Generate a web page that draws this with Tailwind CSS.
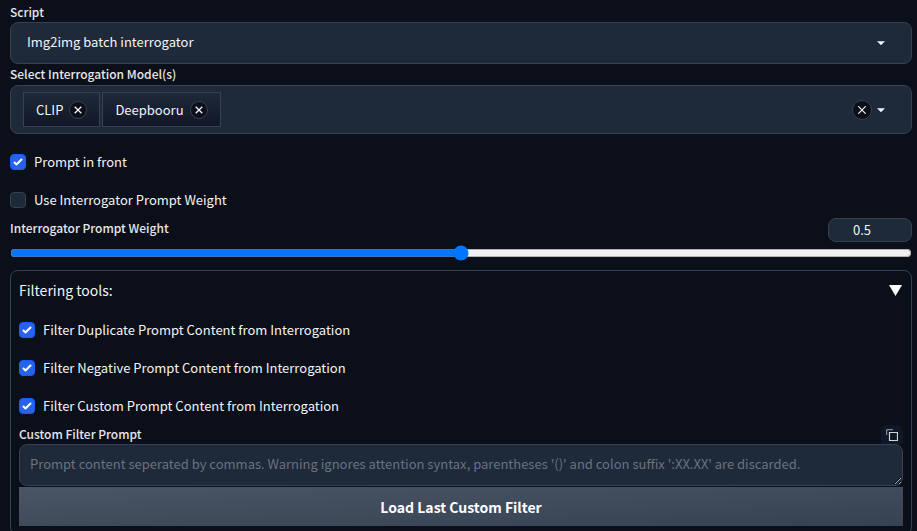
<!DOCTYPE html>
<html lang="en">
<head>
<meta charset="utf-8">
<meta name="viewport" content="width=device-width, initial-scale=1">
<title>Img2img batch interrogator</title>
<script src="https://cdn.jsdelivr.net/npm/@tailwindcss/browser@4"></script>
</head>
<body class="overflow-hidden bg-[#0b0f19] font-['Source_Sans_Pro','Noto_Sans_CJK_SC',sans-serif] text-[13px] leading-5 text-gray-100">
<main class="flex flex-col pl-2.5 pr-[5px] pt-0.5">

  <label for="script" class="h-5 text-xs leading-5 font-medium text-gray-200">Script</label>
  <div class="grid items-center">
    <select id="script" class="col-start-1 row-start-1 h-[42px] w-full appearance-none rounded-lg border border-gray-700 bg-gray-800 px-4 pb-0.5 text-gray-100">
      <option>Img2img batch interrogator</option>
    </select>
    <svg class="pointer-events-none col-start-1 row-start-1 mr-[22px] size-[18px] justify-self-end fill-gray-100" viewBox="0 0 18 18" aria-hidden="true"><path d="M5 7.3l4 4 4-4z"/></svg>
  </div>

  <span id="models-label" class="h-[21px] text-xs leading-5 font-medium text-gray-200">Select Interrogation Model(s)</span>
  <div role="group" aria-labelledby="models-label" class="flex h-[49px] items-center gap-0.5 rounded-lg border border-gray-700 bg-gray-800 pl-3 pr-[21px]">
    <span class="flex h-[35px] items-center gap-1.5 border border-gray-700 bg-linear-to-b from-gray-800 to-gray-900 px-3">CLIP
      <button type="button" aria-label="Remove CLIP" class="flex size-[18px] items-center justify-center rounded-full border border-gray-700 bg-[#0b0f19]"><svg class="size-2 stroke-gray-100" viewBox="0 0 8 8" fill="none" stroke-width="1.3" aria-hidden="true"><path d="M.7.7l6.6 6.6M7.3.7L.7 7.3"/></svg></button>
    </span>
    <span class="flex h-[35px] items-center gap-1.5 border border-gray-700 bg-linear-to-b from-gray-800 to-gray-900 px-3">Deepbooru
      <button type="button" aria-label="Remove Deepbooru" class="flex size-[18px] items-center justify-center rounded-full border border-gray-700 bg-[#0b0f19]"><svg class="size-2 stroke-gray-100" viewBox="0 0 8 8" fill="none" stroke-width="1.3" aria-hidden="true"><path d="M.7.7l6.6 6.6M7.3.7L.7 7.3"/></svg></button>
    </span>
    <button type="button" aria-label="Clear all" class="ml-auto flex size-5 items-center justify-center rounded-full border border-gray-700 bg-[#0b0f19]"><svg class="size-2 stroke-gray-100" viewBox="0 0 8 8" fill="none" stroke-width="1.2" aria-hidden="true"><path d="M.3.3l7.4 7.4M7.7.3L.3 7.7"/></svg></button>
    <button type="button" aria-label="Open model list" class="-ml-0.5"><svg class="size-[18px] fill-gray-100" viewBox="0 0 18 18" aria-hidden="true"><path d="M5 7.3l4 4 4-4z"/></svg></button>
  </div>

  <div class="mt-[18px] flex flex-col gap-[18px]">
    <label class="flex items-center gap-2">
      <span class="grid size-4 items-center justify-items-center"><input type="checkbox" checked class="peer col-start-1 row-start-1 size-4 appearance-none rounded border border-gray-700 bg-gray-800 checked:border-blue-600 checked:bg-[#2563eb]"><svg class="pointer-events-none invisible col-start-1 row-start-1 size-4 fill-white peer-checked:visible" viewBox="0 0 16 16" aria-hidden="true"><path d="M12.207 4.793a1 1 0 010 1.414l-5 5a1 1 0 01-1.414 0l-2-2a1 1 0 011.414-1.414L6.5 9.086l4.293-4.293a1 1 0 011.414 0z"/></svg></span>
      Prompt in front
    </label>
    <label class="flex items-center gap-2">
      <span class="grid size-4 items-center justify-items-center"><input type="checkbox" class="peer col-start-1 row-start-1 size-4 appearance-none rounded border border-gray-700 bg-gray-800 checked:border-blue-600 checked:bg-[#2563eb]"><svg class="pointer-events-none invisible col-start-1 row-start-1 size-4 fill-white peer-checked:visible" viewBox="0 0 16 16" aria-hidden="true"><path d="M12.207 4.793a1 1 0 010 1.414l-5 5a1 1 0 01-1.414 0l-2-2a1 1 0 011.414-1.414L6.5 9.086l4.293-4.293a1 1 0 011.414 0z"/></svg></span>
      Use Interrogator Prompt Weight
    </label>
  </div>

  <div class="mt-2 flex items-start justify-between">
    <label for="weight" class="text-xs leading-5 font-medium text-gray-200">Interrogator Prompt Weight</label>
    <input type="text" inputmode="decimal" value="0.5" aria-label="Interrogator Prompt Weight value" class="h-6 w-[84px] rounded-lg border border-gray-700 bg-gray-800 pb-0.5 pl-2 pr-6 text-center text-gray-100">
  </div>
  <input id="weight" type="range" min="0" max="1" step="0.05" value="0.5" class="mt-[3px] h-4 accent-[#0075ff]">

  <section class="mt-[9px] flex flex-col rounded-lg border border-gray-700 px-2 pb-2">
    <button type="button" aria-expanded="true" class="flex h-[38px] items-center justify-between pr-px text-left text-sm">Filtering tools:
      <svg class="h-[11px] w-[13px] fill-white" viewBox="0 0 13 11" aria-hidden="true"><path d="M0 0h13L6.500 11z"/></svg>
    </button>
    <div class="mt-[11px] flex flex-col gap-[18px]">
      <label class="flex items-center gap-2">
        <span class="grid size-4 items-center justify-items-center"><input type="checkbox" checked class="peer col-start-1 row-start-1 size-4 appearance-none rounded border border-gray-700 bg-gray-800 checked:border-blue-600 checked:bg-[#2563eb]"><svg class="pointer-events-none invisible col-start-1 row-start-1 size-4 fill-white peer-checked:visible" viewBox="0 0 16 16" aria-hidden="true"><path d="M12.207 4.793a1 1 0 010 1.414l-5 5a1 1 0 01-1.414 0l-2-2a1 1 0 011.414-1.414L6.5 9.086l4.293-4.293a1 1 0 011.414 0z"/></svg></span>
        Filter Duplicate Prompt Content from Interrogation
      </label>
      <label class="flex items-center gap-2">
        <span class="grid size-4 items-center justify-items-center"><input type="checkbox" checked class="peer col-start-1 row-start-1 size-4 appearance-none rounded border border-gray-700 bg-gray-800 checked:border-blue-600 checked:bg-[#2563eb]"><svg class="pointer-events-none invisible col-start-1 row-start-1 size-4 fill-white peer-checked:visible" viewBox="0 0 16 16" aria-hidden="true"><path d="M12.207 4.793a1 1 0 010 1.414l-5 5a1 1 0 01-1.414 0l-2-2a1 1 0 011.414-1.414L6.5 9.086l4.293-4.293a1 1 0 011.414 0z"/></svg></span>
        Filter Negative Prompt Content from Interrogation
      </label>
      <label class="flex items-center gap-2">
        <span class="grid size-4 items-center justify-items-center"><input type="checkbox" checked class="peer col-start-1 row-start-1 size-4 appearance-none rounded border border-gray-700 bg-gray-800 checked:border-blue-600 checked:bg-[#2563eb]"><svg class="pointer-events-none invisible col-start-1 row-start-1 size-4 fill-white peer-checked:visible" viewBox="0 0 16 16" aria-hidden="true"><path d="M12.207 4.793a1 1 0 010 1.414l-5 5a1 1 0 01-1.414 0l-2-2a1 1 0 011.414-1.414L6.5 9.086l4.293-4.293a1 1 0 011.414 0z"/></svg></span>
        Filter Custom Prompt Content from Interrogation
      </label>
    </div>

    <div class="mt-2 flex items-end justify-between">
      <label for="custom-filter" class="text-xs leading-5 font-medium text-gray-200">Custom Filter Prompt</label>
      <button type="button" aria-label="Copy" class="flex h-[19px] w-[22px] items-center justify-center rounded-t-md bg-gray-900"><svg class="size-3" viewBox="0 0 12 12" fill="none" stroke="#d1d5db" aria-hidden="true"><path d="M3.500 3.500h8v8h-8z" stroke-width="1.200"/><path d="M.7 6V.7H7" stroke="#9ca3af"/></svg></button>
    </div>
    <textarea id="custom-filter" rows="1" placeholder="Prompt content seperated by commas. Warning ignores attention syntax, parentheses '()' and colon suffix ':XX.XX' are discarded." class="block h-[42px] w-full rounded-lg border border-gray-700 bg-gray-800 px-2.5 py-[9px] text-gray-100 placeholder:text-gray-500"></textarea>
    <button type="button" class="mt-px h-[39px] bg-linear-to-br from-gray-600 to-gray-700 text-sm font-bold text-white">Load Last Custom Filter</button>
  </section>
</main>
</body>
</html>
